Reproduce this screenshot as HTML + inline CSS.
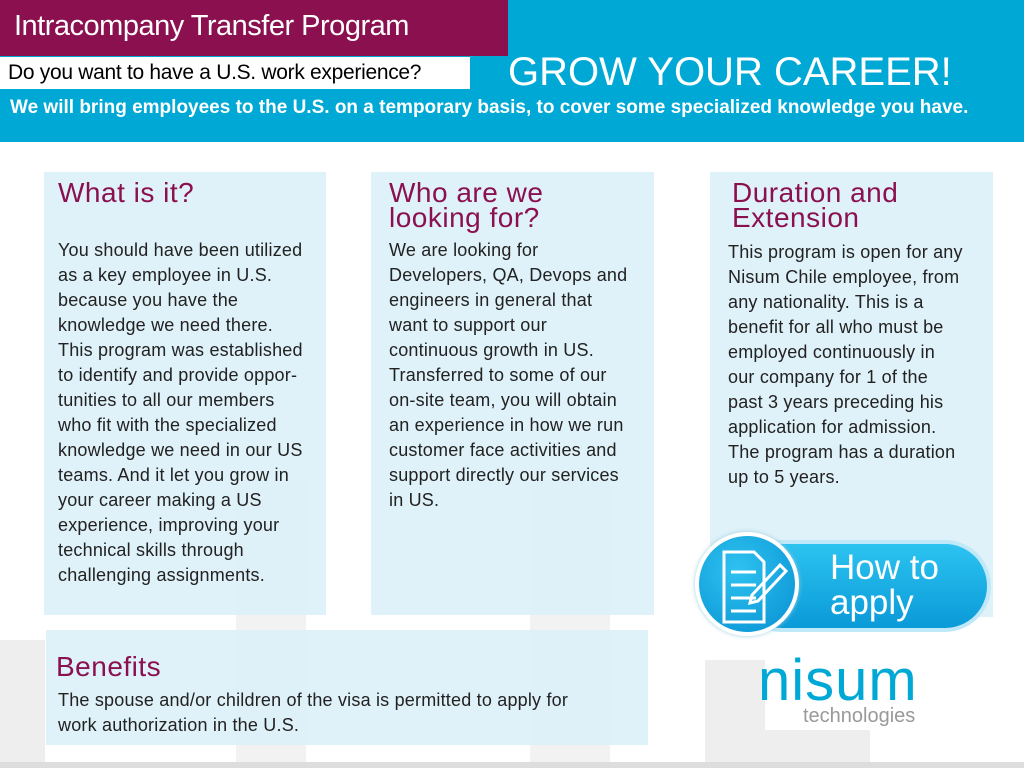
<!DOCTYPE html>
<html><head><meta charset="utf-8"><style>
*{margin:0;padding:0;box-sizing:border-box}
body{width:1024px;height:768px;overflow:hidden;position:relative;background:#fff;font-family:"Liberation Sans","DejaVu Sans",sans-serif}
.a{position:absolute}
.hd{left:0;top:0;width:1024px;height:142px;background:#00a9d5}
.pu{left:0;top:0;width:508px;height:56px;background:#8a1050;color:#fff;font-size:29px;padding:10px 0 0 14px;letter-spacing:-.5px}
.wh{left:0;top:57px;width:470px;height:32px;background:#fff;color:#000;font-size:21px;padding:4px 0 0 8px;letter-spacing:-.3px}
.gr{left:508px;top:50px;color:#fff;font-size:40px;letter-spacing:0}
.sub{left:10px;top:97px;color:#fff;font-size:19px;font-weight:bold;letter-spacing:0}
.p{background:rgba(220,240,248,.92)}
.h{color:#8a1050;font-size:28px;line-height:25px;letter-spacing:.5px}
.t{color:#222;font-size:18px;line-height:25px;letter-spacing:.2px;white-space:nowrap}
.g{background:#eee}
</style></head><body>
<div class="a hd"></div>
<div class="a pu">Intracompany Transfer Program</div>
<div class="a wh">Do you want to have a U.S. work experience?</div>
<div class="a gr">GROW YOUR CAREER!</div>
<div class="a sub">We will bring employees to the U.S. on a temporary basis, to cover some specialized knowledge you have.</div>

<div class="a g" style="left:0;top:640px;width:45px;height:128px"></div>
<div class="a g" style="left:236px;top:480px;width:70px;height:288px;background:#f2f2f2"></div>
<div class="a g" style="left:530px;top:480px;width:80px;height:288px;background:#f2f2f2"></div>
<div class="a g" style="left:705px;top:660px;width:60px;height:108px"></div>
<div class="a g" style="left:760px;top:730px;width:110px;height:38px"></div>
<div class="a" style="left:0;top:762px;width:1024px;height:6px;background:#ddd"></div>

<div class="a p" style="left:44px;top:172px;width:282px;height:443px"></div>
<div class="a h" style="left:58px;top:180px">What is it?</div>
<div class="a t" style="left:58px;top:238px">You should have been utilized<br>as a key employee in U.S.<br>because you have the<br>knowledge we need there.<br>This program was established<br>to identify and provide oppor-<br>tunities to all our members<br>who fit with the specialized<br>knowledge we need in our US<br>teams. And it let you grow in<br>your career making a US<br>experience, improving your<br>technical skills through<br>challenging assignments.</div>

<div class="a p" style="left:371px;top:172px;width:283px;height:443px"></div>
<div class="a h" style="left:389px;top:180px;width:200px">Who are we looking for?</div>
<div class="a t" style="left:389px;top:238px">We are looking for<br>Developers, QA, Devops and<br>engineers in general that<br>want to support our<br>continuous growth in US.<br>Transferred to some of our<br>on-site team, you will obtain<br>an experience in how we run<br>customer face activities and<br>support directly our services<br>in US.</div>

<div class="a p" style="left:710px;top:172px;width:283px;height:445px"></div>
<div class="a h" style="left:732px;top:180px;width:260px">Duration and Extension</div>
<div class="a t" style="left:728px;top:240px">This program is open for any<br>Nisum Chile employee, from<br>any nationality. This is a<br>benefit for all who must be<br>employed continuously in<br>our company for 1 of the<br>past 3 years preceding his<br>application for admission.<br>The program has a duration<br>up to 5 years.</div>

<div class="a p" style="left:46px;top:630px;width:602px;height:115px"></div>
<div class="a h" style="left:56px;top:654px">Benefits</div>
<div class="a t" style="left:58px;top:688px">The spouse and/or children of the visa is permitted to apply for<br>work authorization in the U.S.</div>

<div class="a" style="left:735px;top:540px;width:256px;height:92px;border-radius:46px;background:linear-gradient(#2cc3f0,#0a9ad8);border:4px solid #bfe9f8"></div>
<div class="a" style="left:695px;top:532px;width:104px;height:104px;border-radius:50%;background:radial-gradient(circle at 40% 35%,#2ec2f0,#0790d2);border:4px solid #fff;box-shadow:0 0 4px #9cd"></div>
<svg class="a" style="left:722px;top:550px" width="70" height="75" viewBox="0 0 70 75" fill="none" stroke="#fff" stroke-width="3"><path d="M2 2h30l10 10v60H2z"/><path d="M9 22h25M9 35h25M9 48h25M9 61h25"/><path d="M30 45l28-30 6 6-28 30-8 2z"/></svg>
<div class="a" style="left:830px;top:550px;color:#fff;font-size:35px;line-height:35px">How to<br>apply</div>
<div class="a" style="left:758px;top:652px;color:#00a9d5;font-size:58px;line-height:58px;letter-spacing:1px">nisum</div>
<div class="a" style="left:803px;top:705px;color:#999;font-size:20px">technologies</div>
</body></html>
